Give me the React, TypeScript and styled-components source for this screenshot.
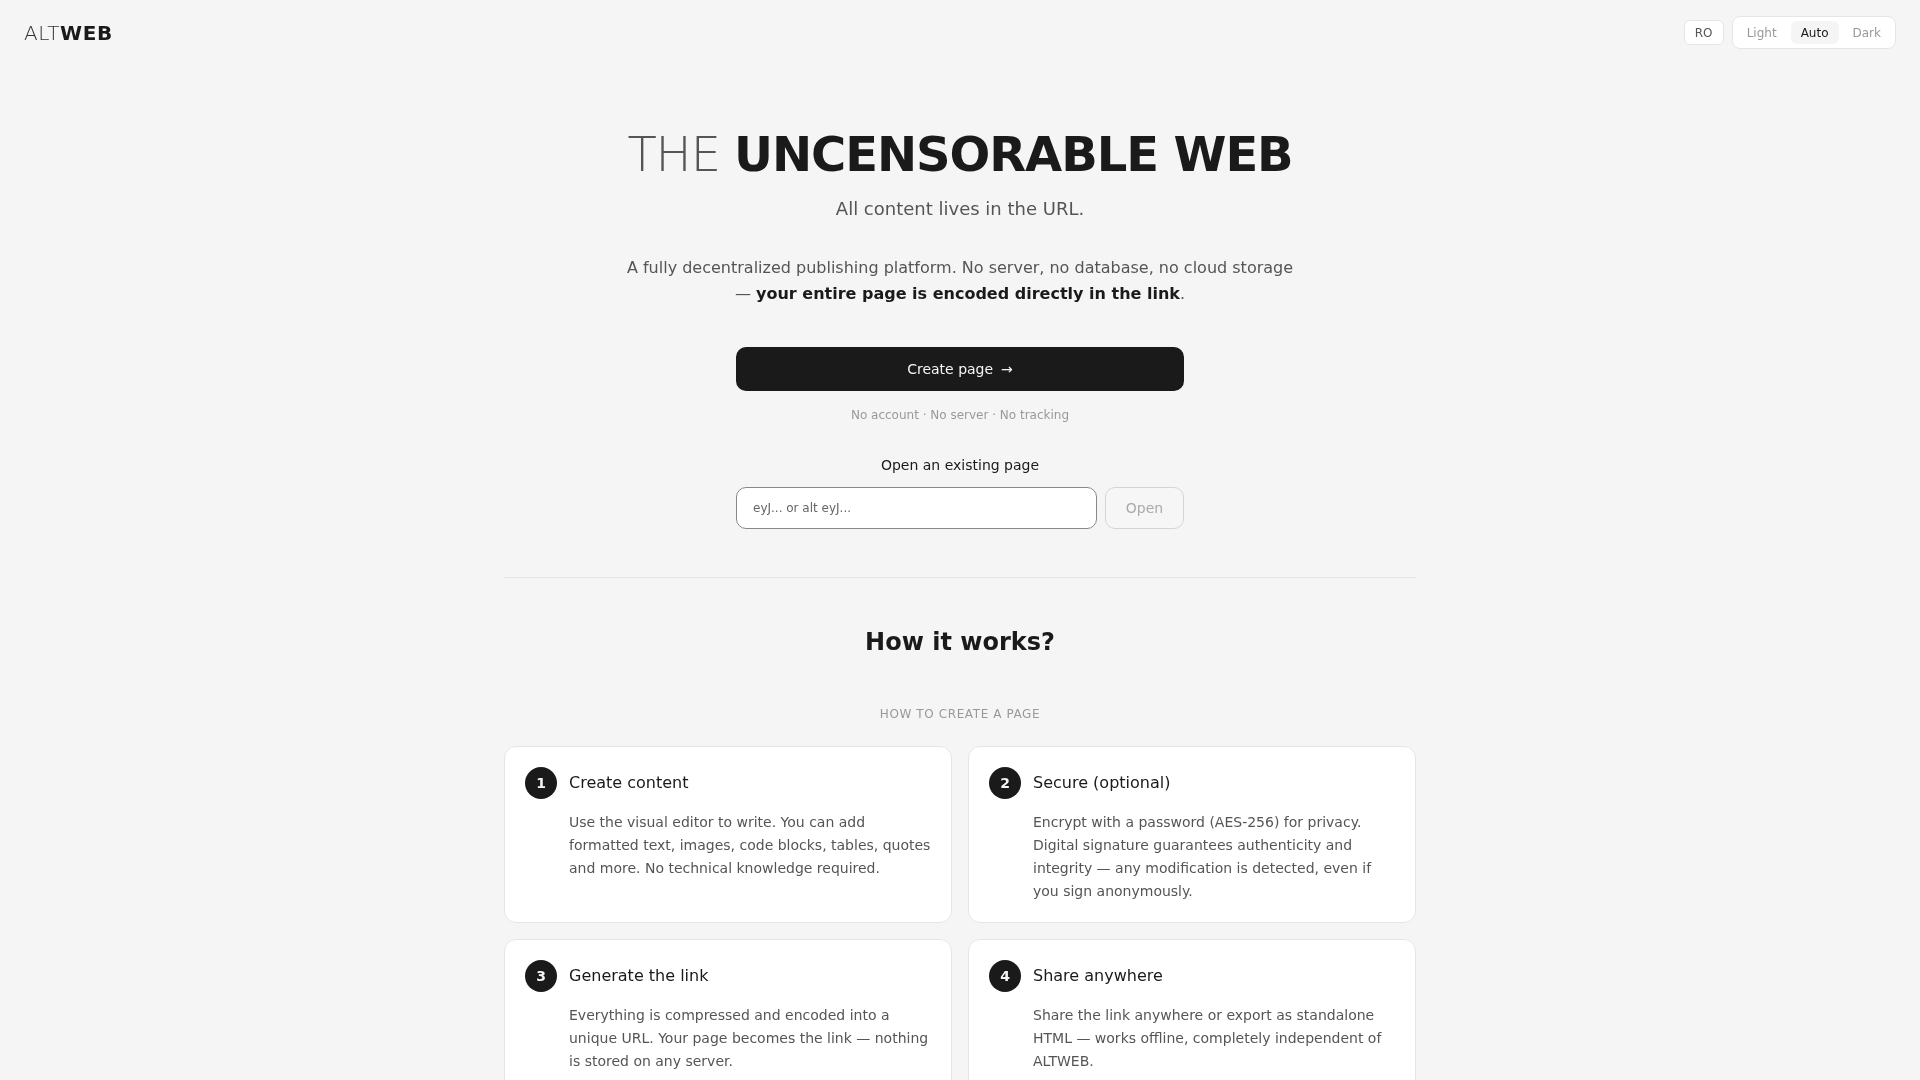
import React from "react";
import styled, { createGlobalStyle } from "styled-components";

const Global = createGlobalStyle`
  html, body { margin: 0; padding: 0; background: #f5f5f5; }
  body { font-family: "DejaVu Sans", sans-serif; color: #1a1a1a; }
  * { box-sizing: border-box; }
`;

const Page = styled.div`
  min-height: 100vh;
  background: #f5f5f5;
`;

const Header = styled.header`
  display: flex;
  align-items: center;
  justify-content: space-between;
  padding: 16px 24px 0;
  will-change: transform;
`;

const Logo = styled.div`
  font-size: 20px;
  letter-spacing: 0.6px;
  color: #333;
  font-weight: 200;
  span { font-weight: 700; color: #1a1a1a; }
`;

const Controls = styled.div`
  display: flex;
  align-items: center;
  gap: 8px;
`;

const Lang = styled.button`
  font: inherit;
  font-size: 12px;
  width: 40px;
  height: 25px;
  padding: 0;
  border-radius: 6px;
  border: 1px solid #e5e5e5;
  background: #fff;
  color: #555;
`;

const ThemeGroup = styled.div`
  display: flex;
  gap: 4px;
  padding: 4px;
  height: 33px;
  background: #fff;
  border: 1px solid #e5e5e5;
  border-radius: 8px;
`;

const ThemeButton = styled.button<{ $active?: boolean }>`
  font: inherit;
  font-size: 12px;
  padding: 0 10px;
  border: 0;
  border-radius: 6px;
  background: ${(p) => (p.$active ? "#f5f5f5" : "transparent")};
  color: ${(p) => (p.$active ? "#1a1a1a" : "#999")};
`;

const Main = styled.main`
  width: 960px;
  margin: 0 auto;
  padding: 0 24px;
  will-change: transform;
`;

const Hero = styled.section`
  display: flex;
  flex-direction: column;
  align-items: center;
  padding: 77px 0 48px;
  border-bottom: 1px solid #e5e5e5;
  text-align: center;
`;

const Title = styled.h1`
  margin: 0;
  font-size: 48px;
  line-height: 1.2;
  font-weight: 200;
  letter-spacing: -1.08px;
  color: #555;
  span { font-weight: 700; color: #1a1a1a; }
`;

const Tagline = styled.p`
  margin: 12px 0 0;
  font-size: 18px;
  line-height: 1.4;
  color: #555;
`;

const Lead = styled.p`
  margin: 34px 0 0;
  width: 680px;
  font-size: 16px;
  line-height: 1.65;
  color: #555;
  strong { color: #1a1a1a; font-weight: 700; }
`;

const Primary = styled.button`
  display: flex;
  align-items: center;
  justify-content: center;
  gap: 8px;
  margin-top: 39px;
  width: 448px;
  height: 44px;
  border: 0;
  border-radius: 10px;
  background: #1a1a1a;
  color: #f5f5f5;
  font: inherit;
  font-size: 14px;
`;

const Note = styled.p`
  margin: 16px 0 0;
  font-size: 12px;
  line-height: 16px;
  color: #999;
`;

const OpenLabel = styled.p`
  margin: 32px 0 0;
  font-size: 14px;
  line-height: 20px;
  color: #1a1a1a;
`;

const OpenRow = styled.div`
  display: flex;
  gap: 8px;
  width: 448px;
  margin-top: 12px;
`;

const OpenInput = styled.input`
  flex: 1;
  min-width: 0;
  height: 42px;
  padding: 0 16px;
  border: 1px solid #888;
  border-radius: 10px;
  background: #fff;
  font: inherit;
  font-size: 12px;
  &::placeholder { color: #666; opacity: 1; }
`;

const OpenButton = styled.button`
  width: 79px;
  height: 42px;
  border: 1px solid #d4d4d4;
  border-radius: 10px;
  background: #f6f6f6;
  color: #aaa;
  font: inherit;
  font-size: 14px;
`;

const Section = styled.section`
  padding-top: 48px;
`;

const SectionTitle = styled.h2`
  margin: 0;
  font-size: 24px;
  line-height: 32px;
  font-weight: 700;
  text-align: center;
  color: #1a1a1a;
`;

const Eyebrow = styled.h3`
  margin: 48px 0 0;
  font-size: 12px;
  line-height: 16px;
  font-weight: 400;
  letter-spacing: 0.6px;
  text-align: center;
  color: #999;
`;

const Grid = styled.div`
  display: grid;
  grid-template-columns: 1fr 1fr;
  gap: 16px;
  margin-top: 24px;
  padding-bottom: 48px;
`;

const Card = styled.article`
  padding: 20px 20px 19px;
  background: #fff;
  border: 1px solid #e5e5e5;
  border-radius: 12px;
`;

const CardHead = styled.div`
  display: flex;
  align-items: center;
  gap: 12px;
`;

const Num = styled.span`
  flex: none;
  display: flex;
  align-items: center;
  justify-content: center;
  width: 32px;
  height: 32px;
  border-radius: 50%;
  background: #1a1a1a;
  color: #f5f5f5;
  font-size: 14px;
  font-weight: 700;
`;

const CardTitle = styled.h4`
  margin: 0;
  font-size: 16px;
  font-weight: 400;
  color: #1a1a1a;
`;

const CardText = styled.p`
  margin: 12px 0 0 44px;
  font-size: 14px;
  line-height: 1.65;
  color: #555;
`;

const steps = [
  ["Create content", "Use the visual editor to write. You can add formatted text, images, code blocks, tables, quotes and more. No technical knowledge required."],
  ["Secure (optional)", "Encrypt with a password (AES-256) for privacy. Digital signature guarantees authenticity and integrity — any modification is detected, even if you sign anonymously."],
  ["Generate the link", "Everything is compressed and encoded into a unique URL. Your page becomes the link — nothing is stored on any server."],
  ["Share anywhere", "Share the link anywhere or export as standalone HTML — works offline, completely independent of ALTWEB."],
];

export default function App() {
  return (
    <Page>
      <Global />
      <Header>
        <Logo>ALT<span>WEB</span></Logo>
        <Controls>
          <Lang>RO</Lang>
          <ThemeGroup>
            <ThemeButton>Light</ThemeButton>
            <ThemeButton $active>Auto</ThemeButton>
            <ThemeButton>Dark</ThemeButton>
          </ThemeGroup>
        </Controls>
      </Header>
      <Main>
        <Hero>
          <Title>THE <span>UNCENSORABLE WEB</span></Title>
          <Tagline>All content lives in the URL.</Tagline>
          <Lead>
            A fully decentralized publishing platform. No server, no database, no cloud storage — <strong>your entire page is encoded directly in the link</strong>.
          </Lead>
          <Primary><span>Create page</span><span>→</span></Primary>
          <Note>No account · No server · No tracking</Note>
          <OpenLabel>Open an existing page</OpenLabel>
          <OpenRow>
            <OpenInput placeholder="eyJ... or alt eyJ..." />
            <OpenButton>Open</OpenButton>
          </OpenRow>
        </Hero>
        <Section>
          <SectionTitle>How it works?</SectionTitle>
          <Eyebrow>HOW TO CREATE A PAGE</Eyebrow>
          <Grid>
            {steps.map(([t, d], i) => (
              <Card key={t}>
                <CardHead>
                  <Num>{i + 1}</Num>
                  <CardTitle>{t}</CardTitle>
                </CardHead>
                <CardText>{d}</CardText>
              </Card>
            ))}
          </Grid>
        </Section>
      </Main>
    </Page>
  );
}
